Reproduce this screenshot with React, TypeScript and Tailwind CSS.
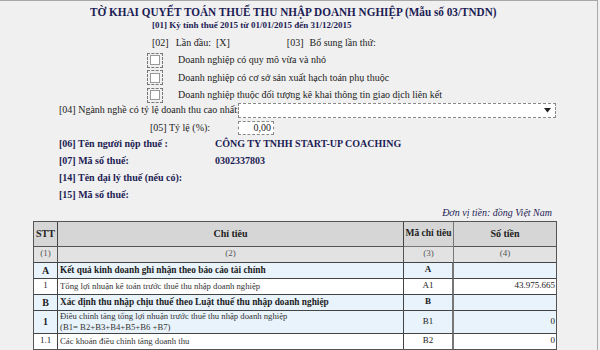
import React from "react";

const navy = "text-[#1c1c54]";

function Check() {
  return (
    <div className="w-[16px] h-[15px] border border-dashed border-[#777] flex items-center justify-center">
      <div className="w-[10px] h-[10px] border border-[#999] bg-white" />
    </div>
  );
}

type Row = {
  stt: string;
  name: React.ReactNode;
  code: string;
  val: string;
  kind: "blue" | "white";
  bold?: boolean;
  h?: string;
};

const rows: Row[] = [
  { stt: "A", name: "Kết quả kinh doanh ghi nhận theo báo cáo tài chính", code: "A", val: "", kind: "blue", bold: true },
  { stt: "1", name: "Tổng lợi nhuận kế toán trước thuế thu nhập doanh nghiệp", code: "A1", val: "43.975.665", kind: "white" },
  { stt: "B", name: "Xác định thu nhập chịu thuế theo Luật thuế thu nhập doanh nghiệp", code: "B", val: "", kind: "blue", bold: true },
  {
    stt: "1",
    name: (
      <>
        Điều chỉnh tăng tổng lợi nhuận trước thuế thu nhập doanh nghiệp
        <br />
        (B1= B2+B3+B4+B5+B6 +B7)
      </>
    ),
    code: "B1",
    val: "0",
    kind: "blue",
    h: "h-[23px]",
  },
  { stt: "1.1", name: "Các khoản điều chỉnh tăng doanh thu", code: "B2", val: "0", kind: "white" },
];

export default function App() {
  return (
    <div
      className="w-[600px] h-[350px] overflow-hidden bg-[#f0f0f0] text-[#222]"
      style={{ fontFamily: '"Liberation Serif", "Times New Roman", serif' }}
    >
      <div className="w-[598px] h-[350px] border-t border-r border-[#a8a8a8]">
        {/* Title */}
        <div className="pt-[4px] pl-[90px] h-[18px]">
          <div className={`origin-left scale-x-[0.862] text-[13px] leading-[13px] font-bold ${navy} whitespace-nowrap`}>
            TỜ KHAI QUYẾT TOÁN THUẾ THU NHẬP DOANH NGHIỆP (Mẫu số 03/TNDN)
          </div>
        </div>
        <div className={`pl-[152px] text-[9px] leading-[12px] font-bold ${navy} whitespace-nowrap`}>
          [01] Kỳ tính thuế 2015 từ 01/01/2015 đến 31/12/2015
        </div>
        <div className="flex mt-[6px] text-[10px] leading-[12px] whitespace-nowrap">
          <span className="ml-[152px]">[02]</span>
          <span className="ml-[7px]">Lần đầu:</span>
          <span className="ml-[5px]">[X]</span>
          <span className="ml-[57px]">[03]</span>
          <span className="ml-[6px]">Bổ sung lần thứ:</span>
        </div>
        <div className="flex flex-col gap-[2.5px] mt-[3.5px] ml-[147px] text-[10px] leading-[12px]">
          {[
            "Doanh nghiệp có quy mô vừa và nhỏ",
            "Doanh nghiệp có cơ sở sản xuất hạch toán phụ thuộc",
            "Doanh nghiệp thuộc đối tượng kê khai thông tin giao dịch liên kết",
          ].map((t) => (
            <div key={t} className="flex items-center h-[15px]">
              <Check />
              <span className="ml-[15px] whitespace-nowrap">{t}</span>
            </div>
          ))}
        </div>
        {/* [04] */}
        <div className="flex items-center text-[10px] leading-[12px]">
          <span className="ml-[59px] w-[179px] whitespace-nowrap">[04] Ngành nghề có tỷ lệ doanh thu cao nhất:</span>
          <div className="w-[318px] h-[15px] bg-white border border-dashed border-[#888] flex items-center justify-end pr-[4px]">
            <svg width="7" height="5" viewBox="0 0 7 5">
              <path d="M0 0 L7 0 L3.5 4.5 Z" fill="#222" />
            </svg>
          </div>
        </div>
        <div className="flex items-center mt-[3.5px] text-[10px] leading-[12px]">
          <span className="ml-[150px] w-[88px] whitespace-nowrap">[05] Tỷ lệ (%):</span>
          <div className="w-[36px] h-[14px] bg-white border border-dashed border-[#888] text-right pr-[2px] leading-[12px]">
            0,00
          </div>
        </div>
        {/* info */}
        <div className={`flex flex-col text-[10px] leading-[17px] font-bold ${navy}`}>
          {[
            ["[06] Tên người nộp thuế :", "CÔNG TY TNHH START-UP COACHING"],
            ["[07] Mã số thuế:", "0302337803"],
            ["[14] Tên đại lý thuế (nếu có):", ""],
            ["[15] Mã số thuế:", ""],
          ].map(([a, b]) => (
            <div key={a} className="flex whitespace-nowrap">
              <span className="ml-[59px] w-[156px]">{a}</span>
              <span>{b}</span>
            </div>
          ))}
        </div>
        <div className={`mt-[4px] pr-[45px] text-right italic text-[10px] leading-[12px] ${navy}`}>
          Đơn vị tiền: đồng Việt Nam
        </div>
        {/* table */}
        <div className="ml-[33px] mt-[1.5px] w-[524px] border border-[#555]">
          <div className="grid grid-cols-[24px_346px_50px_1fr] text-[9px]">
            <div className="h-[24px] bg-[#d6d6d6] border-r border-[#444] flex items-center justify-center font-bold text-[10px]">STT</div>
            <div className="h-[24px] bg-[#d6d6d6] border-r border-[#444] flex items-center justify-center font-bold text-[10px]">Chỉ tiêu</div>
            <div className="h-[24px] bg-[#d6d6d6] border-r border-[#777] flex items-center justify-center font-bold whitespace-nowrap text-[9.5px]">Mã chỉ tiêu</div>
            <div className="h-[24px] bg-[#d6d6d6] flex items-center justify-center font-bold text-[10px]">Số tiền</div>

            {["(1)", "(2)", "(3)", "(4)"].map((t, i) => (
              <div
                key={t}
                className={`h-[16px] bg-[#e2e2e2] border-t border-[#555] ${i === 2 ? "border-r border-[#777]" : i < 3 ? "border-r border-[#444]" : ""} flex items-center justify-center text-[#555]`}
              >
                {t}
              </div>
            ))}

            {rows.map((r, idx) => {
              const bg = r.kind === "blue" ? "bg-[#e8f3fc]" : "bg-white";
              const h = r.h ?? "h-[16px]";
              return (
                <React.Fragment key={idx}>
                  <div className={`${h} ${bg} border-t border-r border-[#444] flex items-center justify-center ${r.kind === "blue" ? "font-bold text-[10px]" : ""}`}>
                    {r.stt}
                  </div>
                  <div className={`${h} ${bg} border-t border-r border-[#444] flex items-center pl-[2px] leading-[10.5px] whitespace-nowrap ${r.bold ? "font-bold text-[9.3px]" : "text-[8.7px] text-[#333]"}`}>
                    <span>{r.name}</span>
                  </div>
                  <div className={`${h} ${bg} border-t border-[#444] border-r-2 border-r-[#777] flex items-center justify-center ${r.bold ? "font-bold" : ""}`}>
                    {r.code}
                  </div>
                  <div className={`${h} ${bg} border-t border-[#444] flex items-center justify-end pr-[1px]`}>
                    {r.val}
                  </div>
                </React.Fragment>
              );
            })}
          </div>
        </div>
      </div>
    </div>
  );
}
